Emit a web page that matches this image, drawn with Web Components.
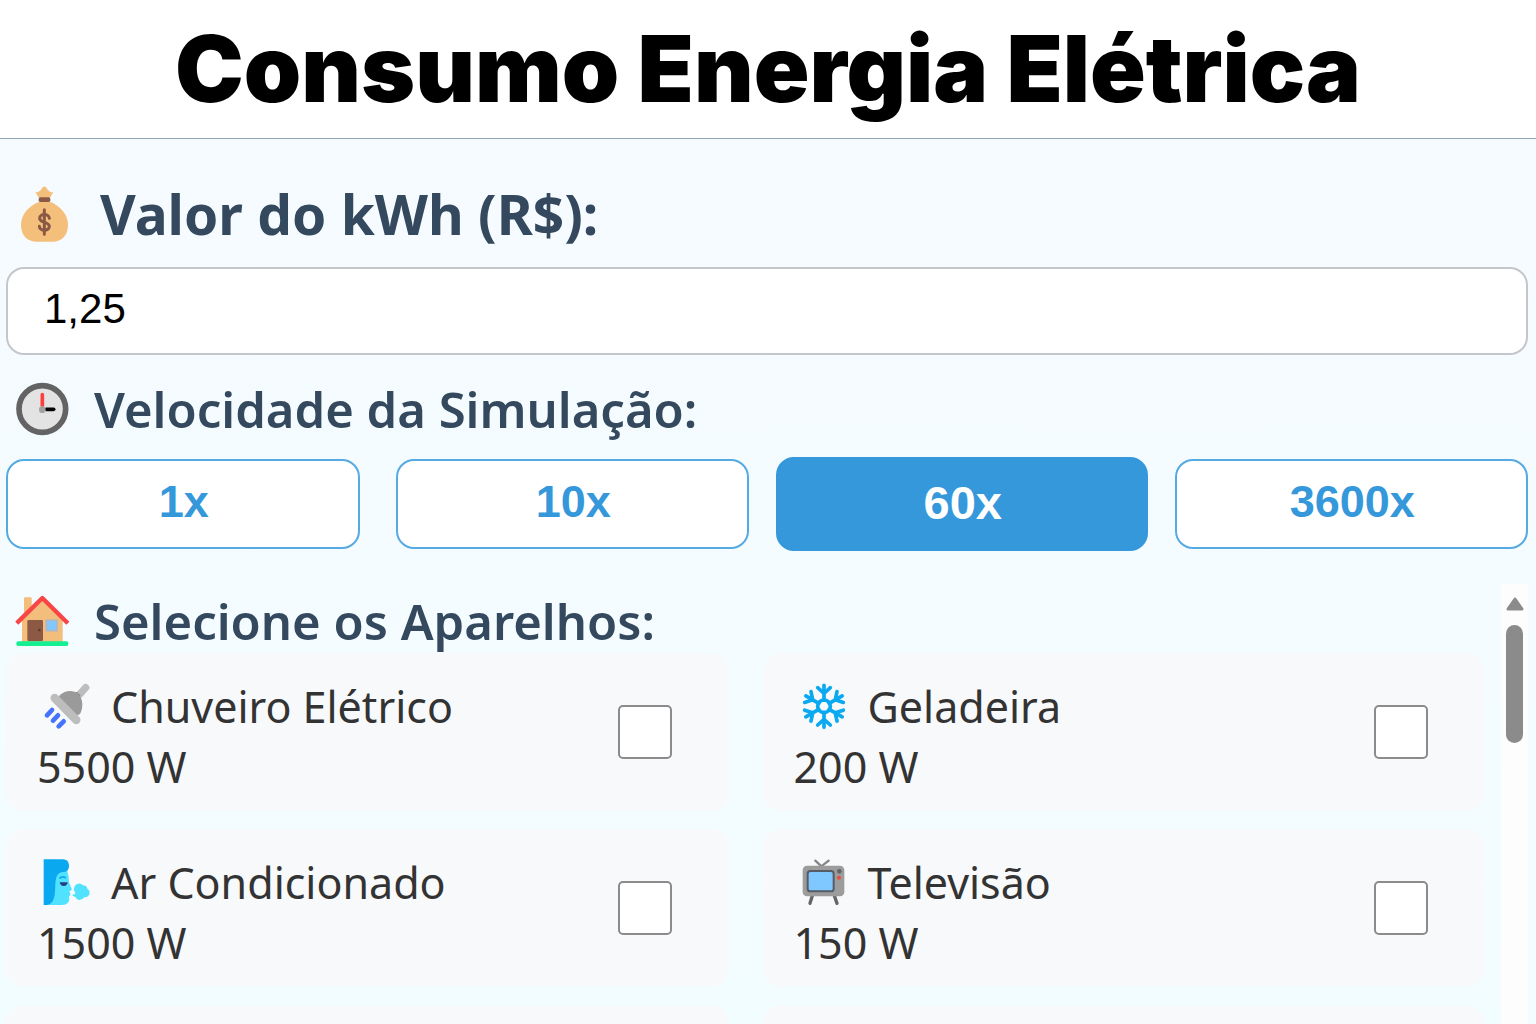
<!DOCTYPE html>
<html lang="pt-BR">
<head>
<meta charset="UTF-8">
<meta name="viewport" content="width=device-width, initial-scale=1.0">
<title>Consumo Energia Elétrica</title>
<style>
  body {
    margin: 0;
  }
</style>
</head>
<body>
<energy-app></energy-app>

<script>
const icons = {
  money: ['42 48 168 168', `
    <path d="M116 83L106 66Q114 68 117 64Q123 63 126 54Q133 45 140 54Q143 63 150 65Q153 68 160 66L150 83Z" fill="#f4bf7b"/>
    <path d="M118 95H150C181 108 204 132 204 165C204 197 185 215 158 215H110C82 215 63 197 63 165C63 132 86 108 118 95Z" fill="#f4bf7b"/>
    <rect x="116" y="82" width="35" height="14" rx="5" fill="#8b5846"/>
    <path d="M148 145C147 130 119 130 119 145C119 160 148 154 148 169C148 184 119 184 118 169M133 119V193" fill="none" stroke="#8b5846" stroke-width="9" stroke-linecap="round"/>`],
  clock: ['42 33 168 168', `
    <circle cx="127" cy="117" r="70" fill="#e4e3e4" stroke="#636363" stroke-width="17"/>
    <path d="M127 74V106" stroke="#fc3f3f" stroke-width="11" stroke-linecap="round"/>
    <path d="M139 118H161" stroke="#050505" stroke-width="11" stroke-linecap="round"/>
    <circle cx="127" cy="119" r="10" fill="#a3a3a3"/>`],
  house: ['42 39 168 168', `
    <rect x="72" y="52" width="23" height="56" rx="3" fill="#f3bd7c"/>
    <path d="M66 118L127 58L188 118V187H66Z" fill="#f3bd7c"/>
    <path d="M55 125L127 54L199 125" fill="none" stroke="#f84545" stroke-width="13" stroke-linecap="square" stroke-linejoin="round"/>
    <rect x="82" y="120" width="47" height="63" rx="4" fill="#8c5a44"/>
    <circle cx="118" cy="150" r="4" fill="#5e3a2c"/>
    <rect x="139" y="121" width="32" height="31" fill="#82c8fd" stroke="#aeb6c8" stroke-width="5"/>
    <rect x="49" y="184" width="156" height="14" rx="6" fill="#13ef91"/>`],
  shower: ['52 27 168 168', `
    <path d="M180 73L198 53" stroke="#bdbdbd" stroke-width="22" stroke-linecap="round"/>
    <path d="M166 70L178 82" stroke="#777" stroke-width="13"/>
    <path d="M120 76C137 59 162 59 176 72C191 88 191 113 181 132L160 142L112 92Z" fill="#9a9a9a"/>
    <path d="M105 84L170 150" stroke="#bdbdbd" stroke-width="25" stroke-linecap="round"/>
    <path d="M82 136L97 120M100 152L115 136M117 169L132 154" stroke="#4373ff" stroke-width="14" stroke-linecap="round"/>`],
  snow: ['43 27 168 168', `
    <defs>
      <g id="arm">
        <path d="M133 91V46M133 70L114 53M133 70L152 53"/>
      </g>
    </defs>
    <g fill="none" stroke="#0ba9ef" stroke-width="11" stroke-linecap="round">
      <circle cx="133" cy="109" r="19"/>
      <use href="#arm"/>
      <use href="#arm" transform="rotate(60 133 109)"/>
      <use href="#arm" transform="rotate(120 133 109)"/>
      <use href="#arm" transform="rotate(180 133 109)"/>
      <use href="#arm" transform="rotate(240 133 109)"/>
      <use href="#arm" transform="rotate(300 133 109)"/>
    </g>`],
  wind: ['52 30 168 168', `
    <path d="M104 82L142 76Q148 92 148 112L157 134L149 139L153 149L148 154C151 172 143 180 126 180H80Z" fill="#50e2ff"/>
    <path d="M72 43H130C144 43 149 54 148 65C147 76 140 82 128 81C113 83 108 96 107 118C106 145 106 176 83 180H72Z" fill="#0aa9ef"/>
    <path d="M121 99Q130 93 137 98" fill="none" stroke="#0aa9ef" stroke-width="5" stroke-linecap="round"/>
    <path d="M120 112H144Q143 123 132 123Q122 123 120 112Z" fill="#253f83"/>
    <path d="M157 151L168 145L162 135Q164 119 174 117Q181 112 190 121Q200 121 203 131Q212 136 209 149Q204 157 194 157Q187 166 178 165Q169 163 168 157Z" fill="#50e2ff"/>`],
  tv: ['43 30 168 168', `
    <path d="M107 47L125 64L147 47" fill="none" stroke="#858585" stroke-width="7" stroke-linecap="round"/>
    <path d="M98 152L91 175M164 152L172 175" stroke="#666" stroke-width="10" stroke-linecap="round"/>
    <rect x="69" y="62" width="125" height="92" rx="13" fill="#9c9c9c"/>
    <rect x="84" y="78" width="78" height="61" rx="8" fill="#7fc7ff" stroke="#565b66" stroke-width="6"/>
    <circle cx="179" cy="79" r="7" fill="#646464"/>
    <circle cx="178" cy="98" r="6" fill="#f04a3e"/>`],
};

class EmojiIcon extends HTMLElement {
  constructor() {
    super();
    this.attachShadow({ mode: 'open' });
  }

  connectedCallback() {
    const [viewBox, shapes] = icons[this.getAttribute('name')];
    this.shadowRoot.innerHTML = `
      <style>
      :host {
        display: block;
        flex: none;
        width: 56px;
        height: 56px;
      }

      svg {
        display: block;
        width: 100%;
        height: 100%;
      }
      </style>
      <svg viewBox="${viewBox}" aria-hidden="true">${shapes}</svg>
    `;
  }
}

customElements.define('emoji-icon', EmojiIcon);

const headingTemplate = document.createElement('template');
headingTemplate.innerHTML = `
  <style>
  :host {
    display: flex;
    align-items: center;
    gap: 24px;
    height: 64px;
    padding-left: 8px;
    color: #34495e;
    font-size: 49px;
    font-weight: 600;
    line-height: 64px;
    white-space: nowrap;
  }

  :host([strong]) {
    gap: 30px;
    font-size: 55px;
    font-weight: 700;
  }
  </style>
  <slot name="icon"></slot>
  <slot></slot>
`;

class SectionHeading extends HTMLElement {
  constructor() {
    super();
    const shadow = this.attachShadow({ mode: 'open' });
    shadow.appendChild(headingTemplate.content.cloneNode(true));
  }
}

customElements.define('section-heading', SectionHeading);

const speedTemplate = document.createElement('template');
speedTemplate.innerHTML = `
  <style>
  :host {
    display: grid;
    grid-template-columns: repeat(4, 1fr);
    gap: 36px;
  }

  button {
    height: 90px;
    padding: 0 0 4px 2px;
    border: 2px solid #55aae2;
    border-radius: 18px;
    background: #fff;
    color: #3498db;
    font: bold 45px "Liberation Sans", Arial, sans-serif;
    cursor: pointer;
  }

  button.active {
    height: 94px;
    margin: -2px -9px;
    border-color: #3498db;
    background: #3498db;
    color: #fff;
    font-size: 47px;
  }
  </style>
`;

class SpeedPicker extends HTMLElement {
  constructor() {
    super();
    const shadow = this.attachShadow({ mode: 'open' });
    shadow.appendChild(speedTemplate.content.cloneNode(true));

    [1, 10, 60, 3600].forEach((speed) => {
      const button = document.createElement('button');
      button.type = 'button';
      button.textContent = `${speed}x`;
      button.classList.toggle('active', speed === 60);
      button.addEventListener('click', () => this.select(button));
      shadow.appendChild(button);
    });
  }

  select(selected) {
    this.shadowRoot.querySelectorAll('button').forEach((button) => {
      button.classList.toggle('active', button === selected);
    });
  }
}

customElements.define('speed-picker', SpeedPicker);

const deviceTemplate = document.createElement('template');
deviceTemplate.innerHTML = `
  <style>
  :host {
    display: block;
    min-height: 158px;
    border-radius: 18px;
    background: #f8f9fb;
  }

  .device {
    display: flex;
    align-items: center;
    justify-content: space-between;
    padding: 14px 57px 14px 31px;
    color: #333;
    font-size: 43px;
    line-height: 60px;
    white-space: nowrap;
    cursor: pointer;
  }

  .device__text {
    padding-top: 10px;
  }

  .device__name {
    display: flex;
    align-items: center;
    gap: 18px;
    height: 60px;
  }

  input {
    appearance: none;
    flex: none;
    width: 54px;
    height: 54px;
    margin: 0;
    border: 2px solid #8b8b8d;
    border-radius: 5px;
    background: #fff;
  }

  input:checked {
    background: #3498db;
  }
  </style>
  <label class="device">
    <span class="device__text">
      <span class="device__name"><emoji-icon></emoji-icon><slot></slot></span>
      <span class="device__power"></span>
    </span>
    <input type="checkbox">
  </label>
`;

class DeviceCard extends HTMLElement {
  constructor() {
    super();
    const template = deviceTemplate.content.cloneNode(true);
    if (this.hasAttribute('icon')) {
      template.querySelector('emoji-icon').setAttribute('name', this.getAttribute('icon'));
      template.querySelector('.device__power').textContent = `${this.getAttribute('power')} W`;
    } else {
      // free slot, only the card background
      template.querySelector('.device').remove();
    }
    this.attachShadow({ mode: 'open' }).appendChild(template);
  }
}

customElements.define('device-card', DeviceCard);

const scrollTemplate = document.createElement('template');
scrollTemplate.innerHTML = `
  <style>
  :host {
    display: flex;
    gap: 16px;
    overflow: hidden;
  }

  .content {
    flex: 1;
    min-width: 0;
    padding-top: 5px;
  }

  .bar {
    display: flex;
    flex-direction: column;
    align-items: center;
    gap: 14px;
    width: 27px;
    padding-top: 13px;
    background: #fdfdfd;
  }

  .thumb {
    width: 17px;
    height: 118px;
    border-radius: 9px;
    background: #8b8b8b;
  }
  </style>
  <div class="content"><slot></slot></div>
  <div class="bar">
    <svg width="18" height="14" viewBox="0 0 18 14" aria-hidden="true">
      <path d="M9 2L16 12H2Z" fill="#8b8b8b" stroke="#8b8b8b" stroke-width="3" stroke-linejoin="round"/>
    </svg>
    <div class="thumb"></div>
  </div>
`;

class ScrollPanel extends HTMLElement {
  constructor() {
    super();
    const shadow = this.attachShadow({ mode: 'open' });
    shadow.appendChild(scrollTemplate.content.cloneNode(true));
  }
}

customElements.define('scroll-panel', ScrollPanel);

const appTemplate = document.createElement('template');
appTemplate.innerHTML = `
  <style>
  :host {
    display: flex;
    flex-direction: column;
    height: 100vh;
    overflow: hidden;
    background: linear-gradient(#f6faff, #f2fdff);
    font-family: "Noto Sans", "Open Sans", sans-serif;
  }

  header {
    flex: none;
    border-bottom: 1px solid #8fa9bb;
    background: #fff;
  }

  h1 {
    margin: 0;
    color: #000;
    font: 900 92px/138px Inter, sans-serif;
    text-align: center;
    white-space: nowrap;
  }

  main {
    flex: 1;
    display: flex;
    flex-direction: column;
    min-height: 0;
    padding: 43px 8px 0 6px;
  }

  label {
    display: block;
  }

  .price {
    box-sizing: border-box;
    width: 100%;
    height: 88px;
    margin: 21px 0 22px;
    padding: 0 36px 4px;
    border: 2px solid #c3c7cb;
    border-radius: 18px;
    background: #fff;
    color: #000;
    font: 42px "Liberation Sans", Arial, sans-serif;
  }

  speed-picker {
    margin: 18px 0 35px;
  }

  scroll-panel {
    flex: 1;
    min-height: 0;
  }

  .devices {
    display: grid;
    grid-template-columns: repeat(2, 1fr);
    gap: 18px 34px;
  }
  </style>

  <header>
    <h1>Consumo Energia Elétrica</h1>
  </header>
  <main>
    <label for="price">
      <section-heading strong><emoji-icon slot="icon" name="money"></emoji-icon>Valor do kWh (R$):</section-heading>
    </label>
    <input class="price" id="price" type="text" inputmode="decimal" value="1,25">
    <section-heading><emoji-icon slot="icon" name="clock"></emoji-icon>Velocidade da Simulação:</section-heading>
    <speed-picker></speed-picker>
    <scroll-panel>
      <section-heading><emoji-icon slot="icon" name="house"></emoji-icon>Selecione os Aparelhos:</section-heading>
      <div class="devices">
        <device-card icon="shower" power="5500">Chuveiro Elétrico</device-card>
        <device-card icon="snow" power="200">Geladeira</device-card>
        <device-card icon="wind" power="1500">Ar Condicionado</device-card>
        <device-card icon="tv" power="150">Televisão</device-card>
        <device-card></device-card>
        <device-card></device-card>
      </div>
    </scroll-panel>
  </main>
`;

class EnergyApp extends HTMLElement {
  constructor() {
    super();
    const shadow = this.attachShadow({ mode: 'open' });
    // importNode so the nested elements are upgraded with their attributes
    shadow.appendChild(document.importNode(appTemplate.content, true));
  }
}

customElements.define('energy-app', EnergyApp);
</script>
</body>
</html>
